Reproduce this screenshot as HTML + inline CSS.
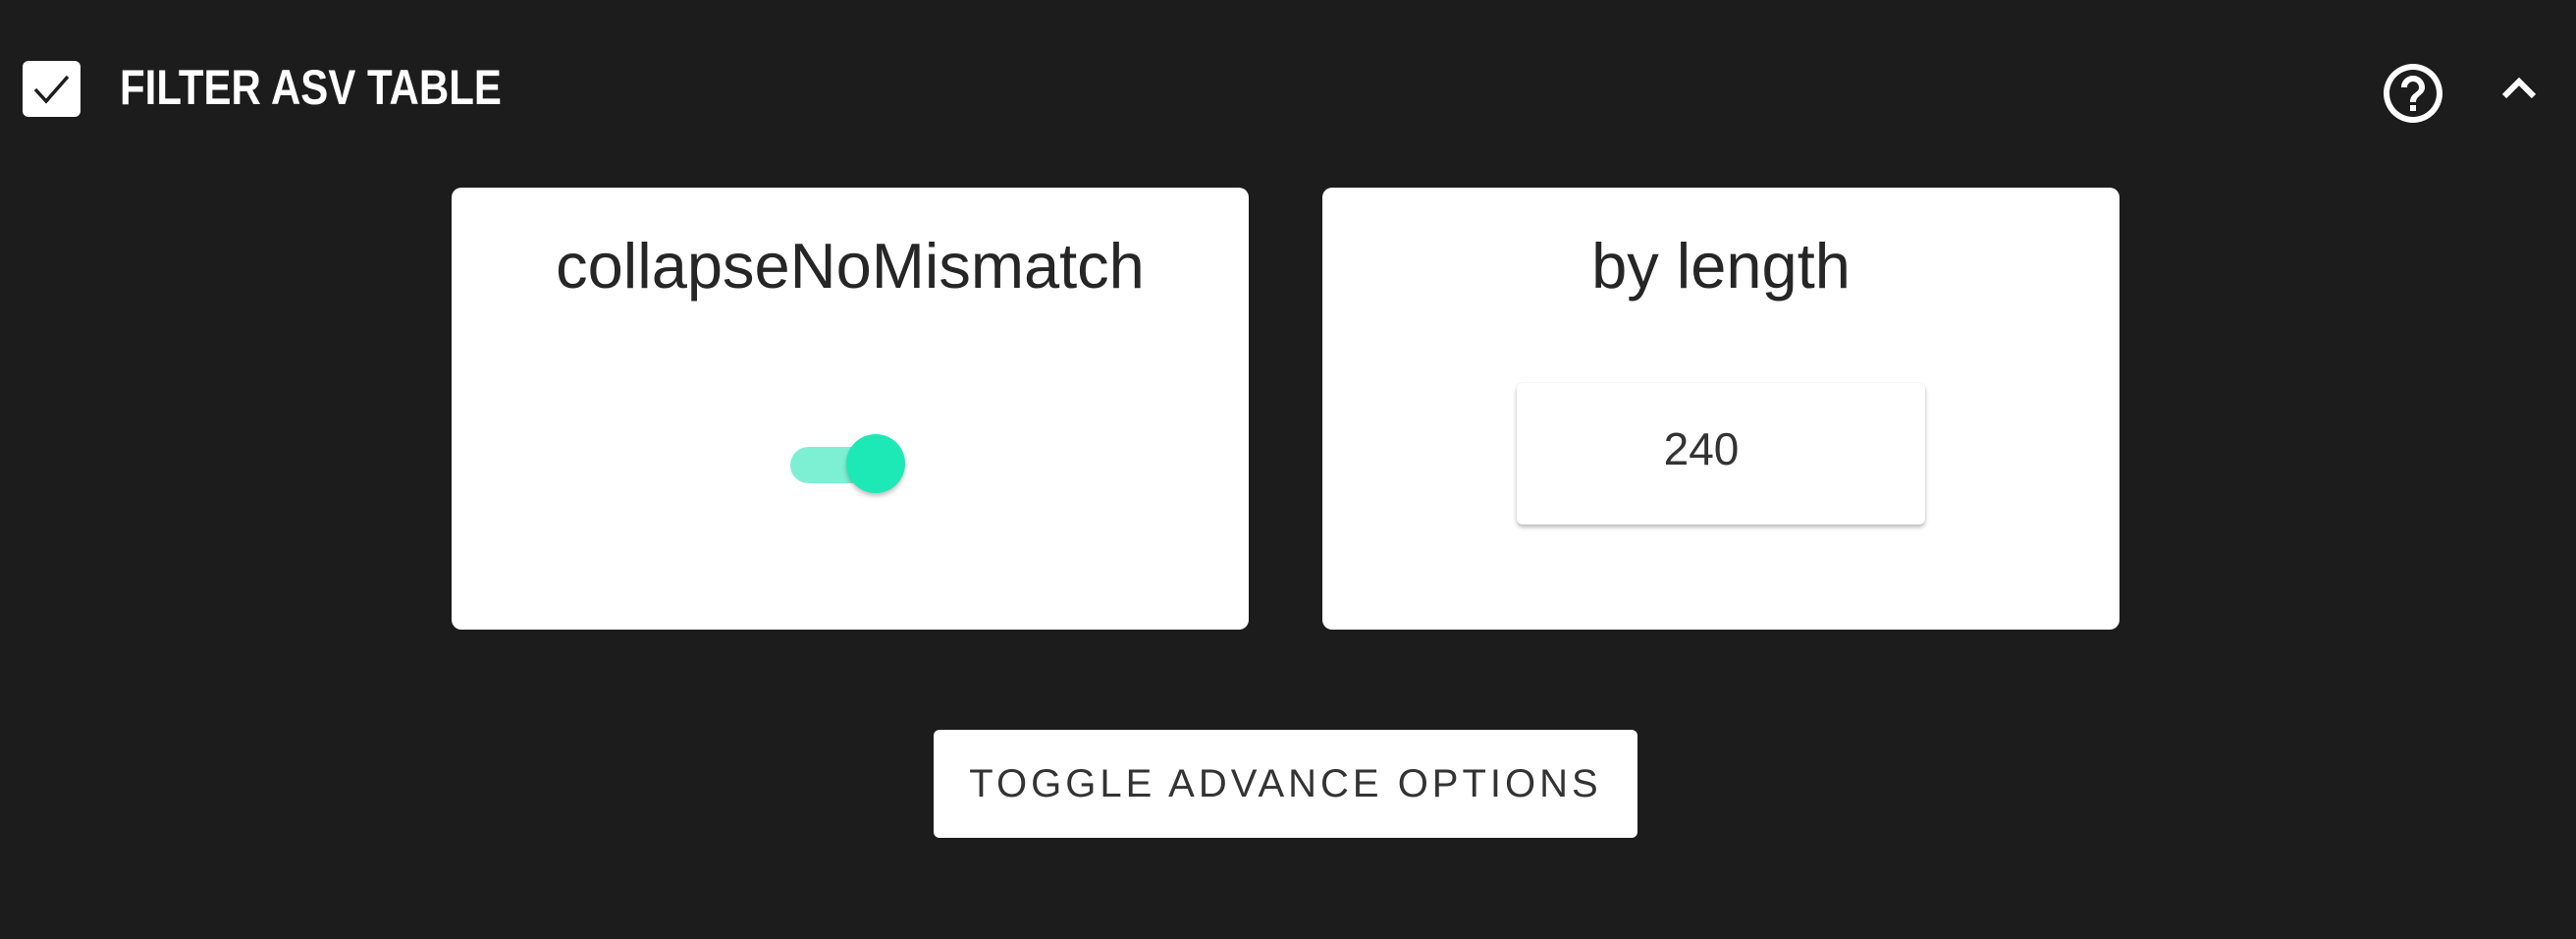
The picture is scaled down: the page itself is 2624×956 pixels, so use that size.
<!DOCTYPE html>
<html><head><style>
html,body{margin:0;padding:0;}
body{width:2624px;height:956px;background:#1c1c1c;position:relative;overflow:hidden;font-family:"Liberation Sans",sans-serif;}
.abs{position:absolute;}
.card{position:absolute;background:#fff;border-radius:10px;top:191px;width:812px;height:450px;}
.title{position:absolute;left:0;right:0;top:42px;text-align:center;font-size:65px;color:#262626;line-height:76px;}
</style></head><body>
<div class="abs" style="left:23px;top:62px;width:59px;height:57px;background:#fff;border-radius:6px;">
<svg width="59" height="57" viewBox="0 0 59 57"><path d="M13 29 L24 41 L46 16" fill="none" stroke="#1c1c1c" stroke-width="3.5"/></svg></div>
<div class="abs" style="left:122px;top:62px;font-size:50px;line-height:55px;color:#fff;font-weight:bold;transform:scaleX(0.84);transform-origin:left;white-space:nowrap;">FILTER ASV TABLE</div>
<svg class="abs" style="left:2422px;top:59px" width="72" height="72" viewBox="0 0 24 24"><path fill="#fff" d="M11 18h2v-2h-2v2zm1-16C6.48 2 2 6.48 2 12s4.48 10 10 10 10-4.48 10-10S17.52 2 12 2zm0 18c-4.41 0-8-3.59-8-8s3.59-8 8-8 8 3.59 8 8-3.59 8-8 8zm0-14c-2.21 0-4 1.79-4 4h2c0-1.1.9-2 2-2s2 .9 2 2c0 2-3 1.75-3 5h2c0-2.25 3-2.5 3-5 0-2.21-1.79-4-4-4z"/></svg>
<svg class="abs" style="left:2546px;top:74px" width="40" height="30" viewBox="0 0 40 30"><path d="M5 24 L20 9 L35 24" fill="none" stroke="#fff" stroke-width="6"/></svg>

<div class="card" style="left:460px;">
<div class="title">collapseNoMismatch</div>
<div class="abs" style="left:345px;top:264px;width:82px;height:37px;border-radius:19px;background:#7df0d3;"></div>
<div class="abs" style="left:402px;top:251px;width:60px;height:60px;border-radius:50%;background:#1de9b6;box-shadow:0 3px 5px rgba(0,0,0,.25);"></div>
</div>
<div class="card" style="left:1347px;">
<div class="title">by length</div>
<div class="abs" style="left:198px;top:199px;width:416px;height:144px;background:#fff;border-radius:6px;box-shadow:0 3px 4px rgba(0,0,0,.25),0 0 2px rgba(0,0,0,.08);">
<div style="text-align:center;line-height:134px;font-size:46px;color:#333;padding-right:40px;">240</div></div>
</div>
<div class="abs" style="left:951px;top:743px;width:717px;height:110px;background:#fff;border-radius:6px;text-align:center;line-height:110px;font-size:40px;letter-spacing:4px;color:#333;">TOGGLE ADVANCE OPTIONS</div>
</body></html>
